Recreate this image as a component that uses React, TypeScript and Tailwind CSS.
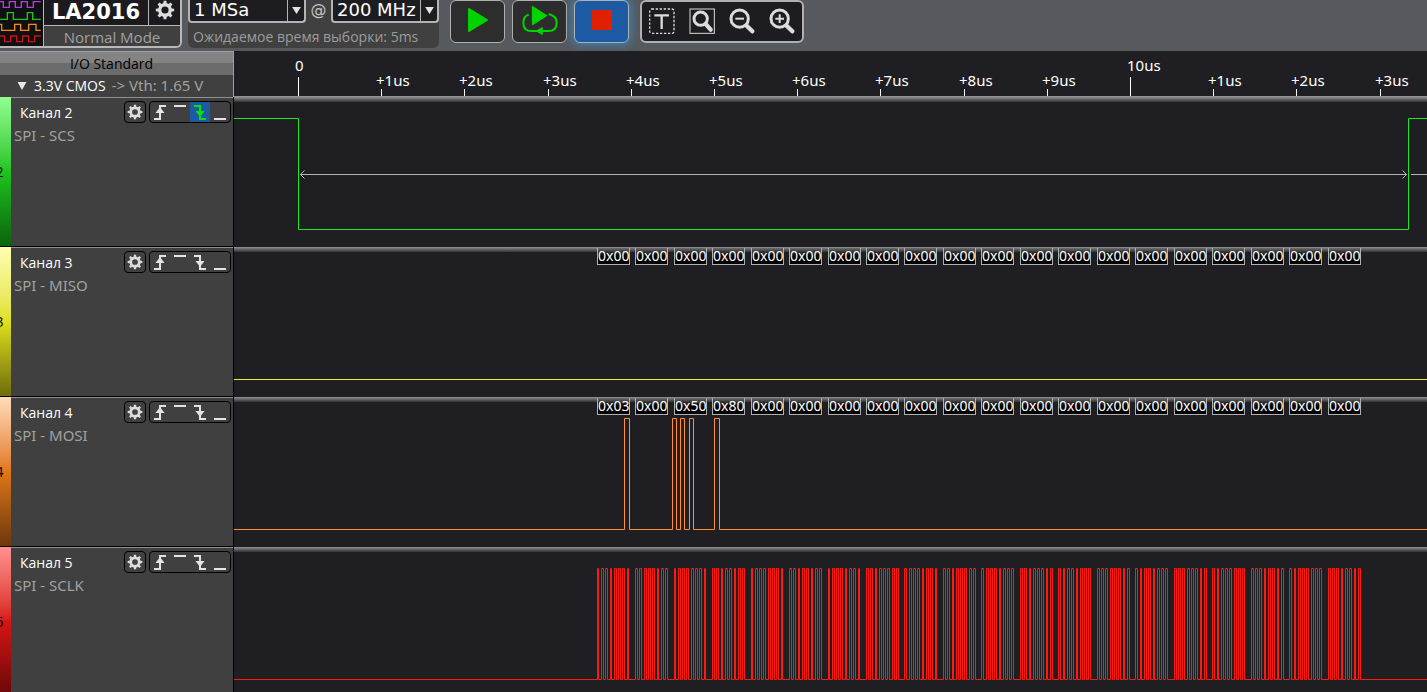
import type { ReactNode } from "react";
import clsx from "clsx";

interface Channel {
  id: number;
  name: string;
  protocol: string;
  strip: string;
  stroke: string;
  edge?: string;
  bytes?: string[];
  path: string;
  measured?: boolean;
}

const HIGH = 21.5;
const LOW = 132.5;
const FAR = 4000;
const BYTE_COUNT = 20;
const FIRST_BYTE = 363.15;
const BYTE_STEP = 38.48;

const byteLeft = (i: number) => Math.floor(FIRST_BYTE + BYTE_STEP * i);

// Builds a low-idle square wave out of [rise, fall] pairs
const wave = (pulses: number[][]) =>
  `M0 ${LOW}` + pulses.map(([r, f]) => `H${r + 0.5}V${HIGH}H${f + 0.5}V${LOW}`).join("") + `H${FAR}`;

const clockPulses: number[][] = [];
for (let b = 0; b < BYTE_COUNT; b++) {
  for (let k = 0; k < 8; k++) {
    const t = FIRST_BYTE + BYTE_STEP * b + 4.29 * k;
    clockPulses.push([Math.floor(t), Math.floor(t + 1.8)]);
  }
}

const zeros = (n: number) => Array<string>(n).fill("0x00");

const channels: Channel[] = [
  {
    id: 2, name: "Канал 2", protocol: "SPI - SCS", edge: "falling", measured: true,
    strip: "from-[#90ff90] via-[#1fc41f] to-[#0b640b]", stroke: "#22e622",
    path: `M0 ${HIGH}H64.5V${LOW}H1174.5V${HIGH}H${FAR}`,
  },
  {
    id: 3, name: "Канал 3", protocol: "SPI - MISO", bytes: zeros(20),
    strip: "from-[#ffffb0] via-[#e0e01c] to-[#6e6e0c]", stroke: "#f0f030",
    path: `M0 ${LOW}H${FAR}`,
  },
  {
    id: 4, name: "Канал 4", protocol: "SPI - MOSI", bytes: ["0x03", "0x00", "0x50", "0x80", ...zeros(16)],
    strip: "from-[#ffdcb8] via-[#e07818] to-[#6e380c]", stroke: "#ff9030",
    path: wave([[390, 395], [438, 442], [446, 450], [455, 459], [480, 485]]),
  },
  {
    id: 5, name: "Канал 5", protocol: "SPI - SCLK",
    strip: "from-[#ff9090] via-[#d81414] to-[#6a0808]", stroke: "#ff1a10",
    path: wave(clockPulses),
  },
];

const edges = [
  { id: "rising", label: "Rising edge", art: <><path d="M4 17H10V4H16" fill="none" stroke="currentColor" strokeWidth="2" /><path d="M10 5L14.5 11H5.5Z" fill="currentColor" /></> },
  { id: "high", label: "High level", art: <path d="M4 4H16" stroke="currentColor" strokeWidth="2" /> },
  { id: "falling", label: "Falling edge", art: <><path d="M4 4H10V17H16" fill="none" stroke="currentColor" strokeWidth="2" /><path d="M10 15L14.5 9H5.5Z" fill="currentColor" /></> },
  { id: "low", label: "Low level", art: <path d="M4 17H16" stroke="currentColor" strokeWidth="2" /> },
];

function Gear({ className }: { className: string }) {
  return (
    <svg viewBox="0 0 24 24" className={className}>
      <circle cx="12" cy="12" r="6.3" fill="none" stroke="currentColor" strokeWidth="4" />
      {[0, 45, 90, 135, 180, 225, 270, 315].map((a) => (
        <path key={a} d="M9.8 5.5L10.4 1H13.6L14.2 5.5Z" fill="currentColor" transform={`rotate(${a} 12 12)`} />
      ))}
    </svg>
  );
}

function Logo() {
  return (
    <svg viewBox="0 0 129 141" className="w-[43px] h-[47px] shrink-0 bg-[#101012]" fill="none" strokeWidth="4">
      <path d="M0 5H10V22H28V5H46V22H64V5H82V22H100V5H122" stroke="#b43ce0" />
      <path d="M0 58H22V38H40V58H82V38H98V58H122" stroke="#18c818" />
      <path d="M0 73H5V91H44V73H62V91H86V73H108V91H122" stroke="#f08c1c" />
      <path d="M0 108H14V125H32V108H50V125H68V108H86V125H104V108H122" stroke="#c81414" />
    </svg>
  );
}

function Combo({ label, options, className }: { label: string; options: string[]; className: string }) {
  return (
    <div className={clsx("relative h-[23px] rounded-b border-2 border-t-0 border-[#b4b4b4] bg-[#1d1d21]", className)}>
      <select aria-label={label} className="block w-full h-[20px] appearance-none bg-transparent pl-1 text-lg leading-5 text-white outline-none font-['DejaVu_Sans',sans-serif]">
        {options.map((o) => <option key={o}>{o}</option>)}
      </select>
      <span className="pointer-events-none absolute right-0 top-0 flex h-full w-[17px] items-center justify-center border-l border-[#b4b4b4] pb-px">
        <svg viewBox="0 0 10 8" className="w-[9px] h-[7px]"><path d="M0 0H10L5 8Z" fill="#e4e4e4" /></svg>
      </span>
    </div>
  );
}

function RunButton({ label, active, children }: { label: string; active?: boolean; children: ReactNode }) {
  return (
    <button
      aria-label={label}
      className={clsx(
        "flex h-[43px] w-[55px] items-center justify-center rounded-md border border-[#b0b0b0] pb-[3px]",
        active ? "bg-[#1c5aa4] shadow-[0_0_8px_2px_#3c82b4]" : "bg-[#2d2d2d]"
      )}
    >
      {children}
    </button>
  );
}

function Toolbar() {
  return (
    <header className="flex h-[51px] items-start bg-[#56595d]">
      <div className="flex h-[48px] w-[182px] shrink-0 overflow-hidden rounded-br-md border-b-2 border-r-2 border-[#b8b8b8]">
        <Logo />
        <div className="flex flex-1 flex-col border-l border-[#b8b8b8]">
          <div className="flex h-[27px] bg-[#1b1b1f]">
            <h1 className="flex-1 text-center text-[21px] font-bold leading-6 text-white font-['DejaVu_Sans',sans-serif]">LA2016</h1>
            <button aria-label="Device settings" className="flex w-[32px] items-center justify-center border-l border-[#b8b8b8] pb-[5px] text-[#dcdcdc]">
              <Gear className="size-5" />
            </button>
          </div>
          <p className="flex-1 border-t border-[#b8b8b8] bg-[#404040] text-center text-[15px] leading-[22px] text-[#a0a0a0]">Normal Mode</p>
        </div>
      </div>

      <div className="ml-[6px] h-[48px] w-[251px] shrink-0 rounded-b-md bg-[#404040]">
        <div className="flex justify-between">
          <Combo label="Sample count" options={["1 MSa", "10 MSa"]} className="w-[118px]" />
          <span className="text-base leading-5 text-[#c4c4c4] font-['DejaVu_Sans',sans-serif]">@</span>
          <Combo label="Sample rate" options={["200 MHz", "100 MHz"]} className="w-[108px]" />
        </div>
        <p className="whitespace-nowrap pl-[5px] pt-1 text-[14px] leading-5 text-[#9c9c9c]">Ожидаемое время выборки: 5ms</p>
      </div>

      <div className="ml-[11px] flex shrink-0 gap-[7px]">
        <RunButton label="Start">
          <svg viewBox="0 0 22 26" className="h-[26px] w-[22px]"><path d="M2 2L20 13L2 24Z" fill="#00d400" stroke="#00d400" strokeWidth="2" strokeLinejoin="round" /></svg>
        </RunButton>
        <RunButton label="Start loop">
          <svg viewBox="0 0 108 96" className="h-[32px] w-[36px]">
            <path d="M20 32Q4 36 4 56Q4 81 28 81H80Q104 81 104 56Q104 36 80 30" fill="none" stroke="#00d400" strokeWidth="6" />
            <path d="M32 9V61L73 35Z" fill="#00d400" stroke="#00d400" strokeWidth="5" strokeLinejoin="round" />
            <path d="M40 81L62 68V94Z" fill="#00d400" />
          </svg>
        </RunButton>
        <RunButton label="Stop" active>
          <span className="size-5 bg-[#e02000]" />
        </RunButton>
      </div>

      <div className="ml-[11px] flex h-[43px] shrink-0 items-center gap-3 rounded-md border-2 border-[#b0b0b0] bg-[#1d1d21] px-[6px] pb-px text-[#dcdcdc]">
        <button aria-label="Text">
          <svg viewBox="0 0 84 84" className="size-7 block" fill="none" stroke="currentColor">
            <rect x="5" y="6" width="73" height="73" rx="6" strokeWidth="4" strokeDasharray="7 5" />
            <path d="M19 25H63M41 25V66" strokeWidth="7" />
          </svg>
        </button>
        <button aria-label="Zoom to fit">
          <svg viewBox="0 0 84 84" className="size-7 block" fill="none" stroke="currentColor">
            <rect x="6" y="6" width="73" height="73" strokeWidth="3" />
            <circle cx="38" cy="35" r="20" strokeWidth="9" />
            <path d="M54 52L68 68" strokeWidth="13" strokeLinecap="round" />
          </svg>
        </button>
        <button aria-label="Zoom out">
          <svg viewBox="0 0 84 84" className="size-7 block" fill="none" stroke="currentColor">
            <circle cx="35" cy="35" r="26" strokeWidth="9" />
            <path d="M56 56L73 73" strokeWidth="13" strokeLinecap="round" />
            <path d="M22 35H48" strokeWidth="6" />
          </svg>
        </button>
        <button aria-label="Zoom in">
          <svg viewBox="0 0 84 84" className="size-7 block" fill="none" stroke="currentColor">
            <circle cx="35" cy="35" r="26" strokeWidth="9" />
            <path d="M56 56L73 73" strokeWidth="13" strokeLinecap="round" />
            <path d="M22 35H48M35 22V48" strokeWidth="6" />
          </svg>
        </button>
      </div>
    </header>
  );
}

function Ruler() {
  return (
    <div className="relative h-[46px] flex-1 overflow-hidden border-b border-[#929292] bg-[#1f1f23] text-white">
      {Array.from({ length: 14 }, (_, i) => {
        const major = i % 10 === 0;
        const x = 64 + Math.round(83.2 * i);
        return (
          <div key={i} className="absolute inset-y-0 flex flex-col justify-end" style={{ left: x }}>
            <span className={clsx("h-5 text-[15px] leading-5 font-['Noto_Sans',sans-serif]", major ? "-ml-[3px] mb-[2px]" : "-ml-[5px] -mb-px")}>
              {i === 0 ? "0" : major ? `${i}us` : `+${i % 10}us`}
            </span>
            <span className={clsx("w-px bg-white", major ? "h-[19px]" : "h-[7px]")} />
          </div>
        );
      })}
    </div>
  );
}

function ChannelRow({ ch }: { ch: Channel }) {
  return (
    <section className="flex h-[150px]">
      <div className="flex w-[234px] shrink-0 border-r border-black">
        <div className={clsx("flex w-[11px] items-center justify-center overflow-hidden border-b border-black bg-linear-to-b", ch.strip)}>
          <span className="-ml-3 text-sm text-black">{ch.id}</span>
        </div>
        <div className="flex-1 border-b border-t border-b-black border-t-[#909090] bg-[#404040] pl-[3px] pr-[2px] pt-[3px]">
          <div className="flex items-start gap-[3px]">
            <h2 className="flex-1 pl-[6px] text-sm leading-6 text-white">{ch.name}</h2>
            <button aria-label={`${ch.name} settings`} className="flex size-[22px] items-center justify-center rounded border border-black text-[#dcdcdc]">
              <Gear className="size-4" />
            </button>
            <div className="flex overflow-hidden rounded border border-black">
              {edges.map((e) => (
                <button key={e.id} aria-label={e.label} className={ch.edge === e.id ? "bg-[#1c5aa4] text-[#00e600]" : "text-[#e4e4e4]"}>
                  <svg viewBox="0 0 20 20" className="block size-5">{e.art}</svg>
                </button>
              ))}
            </div>
          </div>
          <p className="text-[15px] leading-5 text-[#a0a0a0] font-['Noto_Sans',sans-serif]">{ch.protocol}</p>
        </div>
      </div>

      <div className="relative min-w-0 flex-1 overflow-hidden bg-[#1f1f23]">
        <div className="h-[5px] bg-linear-to-b from-[#929292] to-[#333336]" />
        <svg className="absolute inset-0 h-full w-full" fill="none">
          <path d={ch.path} stroke={ch.stroke} strokeWidth="1" />
          {ch.measured && (
            <path d="M66 77.5H1173M1177 77.5H4000M70.5 73.5L66.5 77.5L70.5 81.5M1168.5 73.5L1172.5 77.5L1168.5 81.5" stroke="#b4b4b4" />
          )}
        </svg>
        {ch.bytes?.map((b, i) => (
          <span
            key={i}
            className="absolute top-px h-[17px] w-[33px] border border-t-0 border-[#b0b0b0] bg-linear-to-b from-[#707070] to-black to-60% text-center text-[14px] leading-4 text-white font-['Noto_Sans',sans-serif]"
            style={{ left: byteLeft(i) }}
          >
            {b}
          </span>
        ))}
      </div>
    </section>
  );
}

export default function App() {
  return (
    <div className="h-screen overflow-hidden bg-[#1f1f23] font-['Open_Sans','Noto_Sans',sans-serif]">
      <Toolbar />
      <div className="flex h-[46px]">
        <div className="flex w-[234px] shrink-0 flex-col border-r border-t border-[#a0a0a0] bg-[#404040] text-sm">
          <div className="h-[23px] bg-linear-to-b from-[#848484] from-50% to-[#6c6c6c] to-50% pr-[10px] text-center leading-6 text-black">
            I/O Standard
          </div>
          <button className="flex h-[22px] items-center whitespace-nowrap pl-[17px] text-white">
            <svg viewBox="0 0 10 9" className="mr-[7px] h-[8px] w-[10px]"><path d="M0 0H10L5 9Z" fill="#e8e8e8" /></svg>
            3.3V CMOS
            <span className="ml-[6px] text-[15px] text-[#a0a0a0] font-['Noto_Sans',sans-serif]">-&gt; Vth: 1.65 V</span>
          </button>
        </div>
        <Ruler />
      </div>
      <main>
        {channels.map((ch) => <ChannelRow key={ch.id} ch={ch} />)}
      </main>
    </div>
  );
}
